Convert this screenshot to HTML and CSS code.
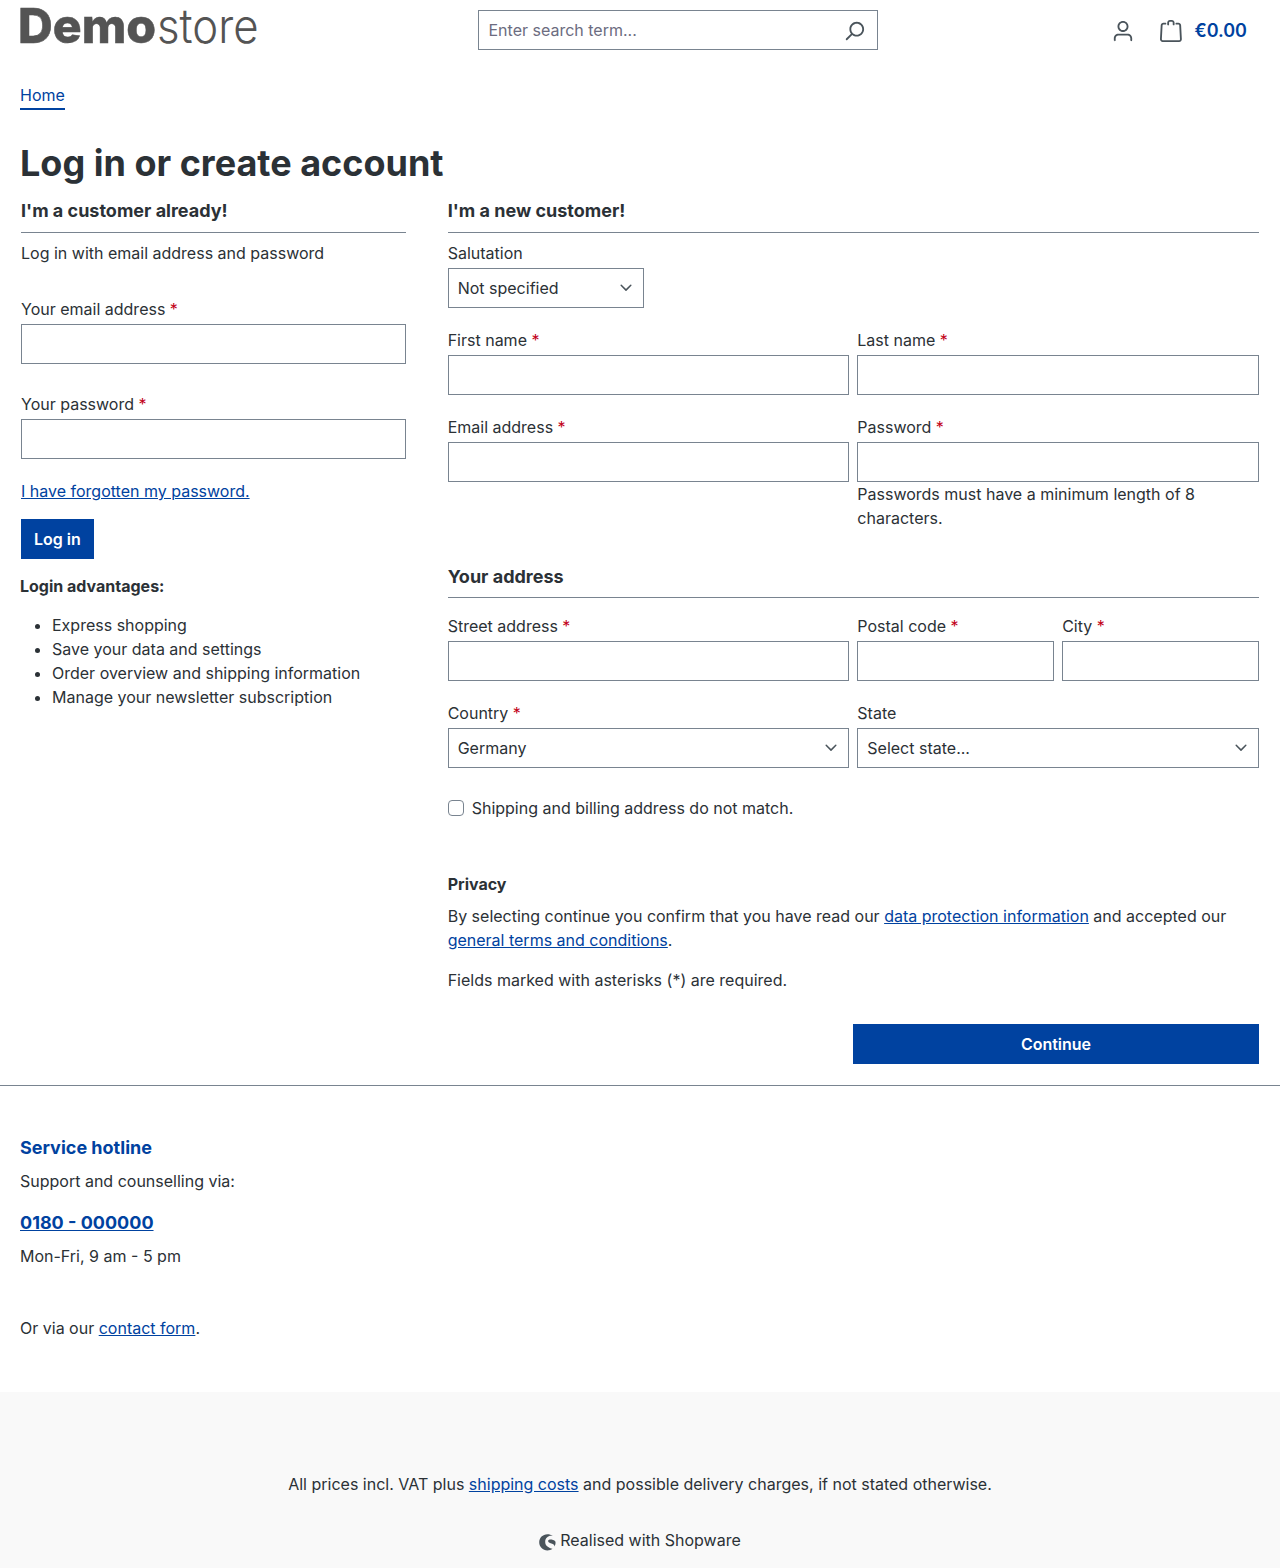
FILE: index.html
```html
<!DOCTYPE html>
<html lang="en">
<head>
<meta charset="utf-8">
<title>Log in or create account</title>
<link rel="stylesheet" href="styles.css">
</head>
<body>
<header class="header">
  <a class="logo" aria-label="Demostore">
    <svg width="240" height="52" viewBox="0 0 240 52" fill="#545454">
      <text class="logo-bold" x="-2" y="39" textLength="138" lengthAdjust="spacingAndGlyphs">Demo</text>
      <text class="logo-light" x="137" y="39" textLength="101.500" lengthAdjust="spacingAndGlyphs">store</text>
    </svg>
  </a>
  <form class="search">
    <input class="search-input" type="search" placeholder="Enter search term...">
    <button class="search-button" type="button" aria-label="Search">
      <svg class="icon" viewBox="0 0 24 24"><path fill-rule="evenodd" d="M10.0944 16.3199 4.707 21.707c-.3905.3905-1.0237.3905-1.4142 0-.3905-.3905-.3905-1.0237 0-1.4142L8.68 14.9056C7.6271 13.551 7 11.8487 7 10c0-4.4183 3.5817-8 8-8s8 3.5817 8 8-3.5817 8-8 8c-1.8487 0-3.551-.627-4.9056-1.6801zM15 16c3.3137 0 6-2.6863 6-6s-2.6863-6-6-6-6 2.6863-6 6 2.6863 6 6 6z"/></svg>
    </button>
  </form>
  <div class="actions">
    <svg class="icon" viewBox="0 0 24 24"><path fill-rule="evenodd" d="M12 3C9.7909 3 8 4.7909 8 7c0 2.2091 1.7909 4 4 4 2.2091 0 4-1.7909 4-4 0-2.2091-1.7909-4-4-4zm0-2c3.3137 0 6 2.6863 6 6s-2.6863 6-6 6-6-2.6863-6-6 2.6863-6 6-6zM4 22.099c0 .5523-.4477 1-1 1s-1-.4477-1-1V20c0-2.7614 2.2386-5 5-5h10.0007c2.7614 0 5 2.2386 5 5v2.099c0 .5523-.4477 1-1 1s-1-.4477-1-1V20c0-1.6569-1.3431-3-3-3H7c-1.6569 0-3 1.3431-3 3v2.099z"/></svg>
    <a class="cart">
      <svg class="icon" viewBox="0 0 24 24"><path fill-rule="evenodd" d="M5.892 3c.5523 0 1 .4477 1 1s-.4477 1-1 1H3.7895a1 1 0 0 0-.9986.9475l-.7895 15c-.029.5515.3946 1.0221.9987 1.0525h17.8102c.5523 0 1-.4477.9986-1.0525l-.7895-15A1 1 0 0 0 20.0208 5H17.892c-.5523 0-1-.4477-1-1s.4477-1 1-1h2.1288c1.5956 0 2.912 1.249 2.9959 2.8423l.7894 15c.0035.0788.0035.0788.0042.1577 0 1.6569-1.3432 3-3 3H3c-.079-.0007-.079-.0007-.1577-.0041-1.6546-.0871-2.9253-1.499-2.8382-3.1536l.7895-15C.8775 4.249 2.1939 3 3.7895 3H5.892zm4 2c0 .5523-.4477 1-1 1s-1-.4477-1-1V3c0-1.6569 1.3432-3 3-3h2c1.6569 0 3 1.3431 3 3v2c0 .5523-.4477 1-1 1s-1-.4477-1-1V3c0-.5523-.4477-1-1-1h-2c-.5523 0-1 .4477-1 1v2z"/></svg>
      <span class="cart-total">€0.00</span>
    </a>
  </div>
</header>

<nav class="nav"><a class="nav-link">Home</a></nav>

<main class="main">
  <h1 class="page-title">Log in or create account</h1>
  <div class="columns">
    <section class="login">
      <form class="login-card">
        <h2 class="card-title">I'm a customer already!</h2>
        <p class="login-intro">Log in with email address and password</p>
        <div class="field login-field">
          <label class="label" for="login-mail">Your email address <span class="required">*</span></label>
          <input class="control" id="login-mail" type="email">
        </div>
        <div class="field login-field">
          <label class="label" for="login-pass">Your password <span class="required">*</span></label>
          <input class="control" id="login-pass" type="password">
        </div>
        <p class="forgot"><a class="link" href="#">I have forgotten my password.</a></p>
        <button class="button" type="button">Log in</button>
      </form>
      <p class="advantages-title">Login advantages:</p>
      <ul class="advantages">
        <li>Express shopping</li>
        <li>Save your data and settings</li>
        <li>Order overview and shipping information</li>
        <li>Manage your newsletter subscription</li>
      </ul>
    </section>

    <form class="register">
      <h2 class="card-title">I'm a new customer!</h2>
      <div class="fields">
        <div class="field">
          <label class="label" for="salutation">Salutation</label>
          <select class="control select" id="salutation"><option>Not specified</option></select>
        </div>
        <div class="field half first">
          <label class="label" for="first">First name <span class="required">*</span></label>
          <input class="control" id="first" type="text">
        </div>
        <div class="field half">
          <label class="label" for="last">Last name <span class="required">*</span></label>
          <input class="control" id="last" type="text">
        </div>
        <div class="field half">
          <label class="label" for="mail">Email address <span class="required">*</span></label>
          <input class="control" id="mail" type="email">
        </div>
        <div class="field half">
          <label class="label" for="pass">Password <span class="required">*</span></label>
          <input class="control" id="pass" type="password">
          <p class="hint">Passwords must have a minimum length of 8 characters.</p>
        </div>
      </div>
      <h2 class="card-title address-title">Your address</h2>
      <div class="fields address-fields">
        <div class="field half">
          <label class="label" for="street">Street address <span class="required">*</span></label>
          <input class="control" id="street" type="text">
        </div>
        <div class="field">
          <label class="label" for="zip">Postal code <span class="required">*</span></label>
          <input class="control" id="zip" type="text">
        </div>
        <div class="field">
          <label class="label" for="city">City <span class="required">*</span></label>
          <input class="control" id="city" type="text">
        </div>
        <div class="field half">
          <label class="label" for="country">Country <span class="required">*</span></label>
          <select class="control select" id="country"><option>Germany</option></select>
        </div>
        <div class="field half">
          <label class="label" for="state">State</label>
          <select class="control select" id="state"><option>Select state...</option></select>
        </div>
      </div>
      <label class="check"><input class="checkbox" type="checkbox">Shipping and billing address do not match.</label>
      <div class="privacy">
        <strong class="privacy-title">Privacy</strong>
        <p class="privacy-text">By selecting continue you confirm that you have read our <a class="link" href="#">data protection information</a> and accepted our <a class="link" href="#">general terms and conditions</a>.</p>
      </div>
      <p class="required-note">Fields marked with asterisks (*) are required.</p>
      <button class="button button-wide" type="button">Continue</button>
    </form>
  </div>
</main>

<footer class="footer">
  <div class="hotline">
    <h3 class="hotline-title">Service hotline</h3>
    <p class="hotline-text">Support and counselling via:</p>
    <a class="link hotline-phone" href="#">0180 - 000000</a>
    <p class="hotline-text">Mon-Fri, 9 am - 5 pm</p>
    <p class="hotline-contact">Or via our <a class="link" href="#">contact form</a>.</p>
  </div>
  <div class="footer-bottom">
    <p class="vat">All prices incl. VAT plus <a class="link" href="#">shipping costs</a> and possible delivery charges, if not stated otherwise.</p>
    <p class="copyright">
      <svg class="shopware" width="17" height="17" viewBox="0 0 17 17"><path d="M13.800 2C12.300.8 10.400.2 8.400.2 3.800.2.2 3.800.2 8.300s3.700 8.100 8.200 8.100c1.900 0 3.700-.6 5.100-1.700-3.500-1-7.300-2.700-7.300-6.800 0-3.700 2.700-6.100 5.800-6.100.6 0 1.200.1 1.800.2z"/><path d="M16.500 7.900c-.2-1.100-1.200-1.600-2.500-2-1.400-.4-2.700-.5-3.900-.1-1.200.5-1.300 1.600-.4 2.400 1.500 1.300 4.100 1.400 5.200 2.600.4.5.5 1.100.4 1.600 1-1.200 1.400-2.800 1.200-4.500z"/></svg>
      Realised with Shopware
    </p>
  </div>
</footer>
</body>
</html>
```
FILE: styles.css
```css
* { box-sizing: border-box; }

body {
  margin: 0;
  color: #2b3136;
  background: #fff;
  font: 400 16px/24px Inter, "Liberation Sans", sans-serif;
}

h1, h2, h3, p, ul { margin: 0; }

.link { color: #0042a0; text-decoration: underline; }

.header {
  display: grid;
  grid-template-columns: 438px 400px 1fr;
  column-gap: 20px;
  height: 60px;
  padding: 4px 33px 0 20px;
}
.logo { display: block; height: 52px; }
.logo svg { display: block; overflow: visible; }
.logo-bold { font-size: 48px; line-height: 48px; font-weight: 800; stroke: #545454; stroke-width: 0.5px; }
.logo-light { font-size: 48px; line-height: 48px; font-weight: 300; }

.icon { width: 22px; height: 22px; fill: #4a545b; flex: none; display: block; }

.search {
  display: flex;
  height: 40px;
  margin-top: 6px;
  border: 1px solid #798490;
}
.search-input {
  flex: 1;
  min-width: 0;
  padding: 0 9px 0 9.5px;
  border: 0;
  background: none;
  font: inherit;
  color: inherit;
  outline: 0;
}
.search-input::placeholder { color: #6c6c80; opacity: 1; }
.search-button { padding: 2px 12px 0; border: 0; background: none; }

.actions { display: flex; justify-content: flex-end; align-items: center; gap: 26px; height: 44px; margin-top: 5px; }
.cart { display: flex; align-items: center; gap: 12px; }
.cart-total { color: #0042a0; font-size: 18px; font-weight: 600; }

.nav { display: flex; padding: 23px 20px 0; }
.nav-link { padding-bottom: 1px; color: #0042a0; border-bottom: 2px solid #0042a0; }

.main { padding: 32px 21px 21px; }
.page-title { margin-left: -1px; font-size: 36px; line-height: 43px; font-weight: 700; }

.columns { display: grid; grid-template-columns: 385px 811.33px; column-gap: 41.67px; margin-top: 12px; align-items: start; }

.card-title {
  height: 36px;
  border-bottom: 1px solid #798490;
  font-size: 18px;
  line-height: 27px;
  font-weight: 700;
}

.login-intro { margin: 8px 0 32px; }
.field { display: flex; flex-direction: column; }
.label { margin-bottom: 3px; }
.required { color: #c20017; }
.control {
  width: 100%;
  height: 40px;
  padding: 0 9px;
  border: 1px solid #798490;
  border-radius: 0;
  background-color: #fff;
  color: inherit;
  font: inherit;
}
.select {
  appearance: none;
  background-image: url("data:image/svg+xml,%3Csvg xmlns='http://www.w3.org/2000/svg' width='12' height='8' viewBox='0 0 12 8'%3E%3Cpath d='M1.2 1.3 6 6.100 10.800 1.300' fill='none' stroke='%234a545b' stroke-width='1.5' stroke-linecap='round' stroke-linejoin='round'/%3E%3C/svg%3E");
  background-repeat: no-repeat;
  background-position: right 11px center;
}
.login-field { margin-bottom: 28px; }
.forgot { margin: -8px 0 16px; }

.button {
  display: block;
  height: 40px;
  padding: 0 13px;
  border: 0;
  background: #0042a0;
  color: #fff;
  font: 600 16px/40px Inter, "Liberation Sans", sans-serif;
}
.button-wide { width: 406px; margin: 32px 0 0 auto; }

.advantages-title { margin: 15px 0 15px -1px; font-weight: 700; }
.advantages { margin-left: -1px; padding-left: 32px; }

.fields { display: grid; grid-template-columns: repeat(4, 1fr); gap: 20px 8px; margin-top: 8px; }
.half { grid-column: span 2; }
.first { grid-column: 1 / span 2; }
.address-title { height: 35px; margin-top: 33px; }
.address-fields { margin-top: 16px; }

.check { display: flex; align-items: center; gap: 8px; margin-top: 28px; }
.checkbox {
  appearance: none;
  width: 16px;
  height: 16px;
  margin: 0;
  border: 1px solid #798490;
  border-radius: 4px;
  background: #fff;
}

.privacy { margin-top: 52px; }
.privacy-title { display: block; font-weight: 700; }
.privacy-text { margin-top: 8px; }
.required-note { margin-top: 16px; }

.footer { border-top: 1px solid #798490; }
.hotline { padding: 48px 20px 52px; }
.hotline-title { color: #0042a0; font-size: 18px; line-height: 27px; font-weight: 700; }
.hotline-text { margin-top: 8px; }
.hotline-phone { display: block; margin-top: 16px; font-size: 18px; line-height: 27px; font-weight: 700; }
.hotline-contact { margin-top: 48px; }
.footer-bottom { height: 176px; padding-top: 80px; background: #f9f9f9; text-align: center; }
.copyright { display: flex; justify-content: center; align-items: center; gap: 4px; margin-top: 32px; }
.shopware { fill: #4a545b; position: relative; top: 2px; }
```
